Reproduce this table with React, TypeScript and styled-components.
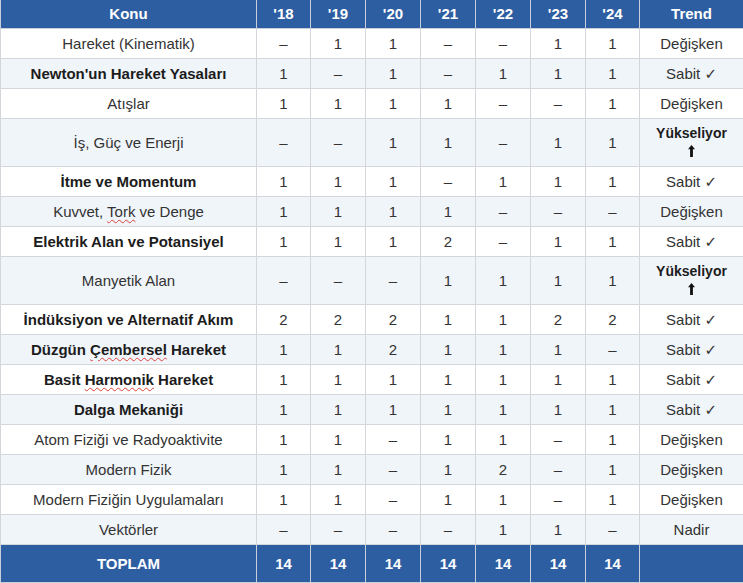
import React from 'react'
import styled, { createGlobalStyle } from 'styled-components'

const GlobalStyle = createGlobalStyle`
  html, body {
    margin: 0;
    padding: 0;
    background: #ffffff;
  }
  body {
    font-family: "Liberation Sans", Arial, "DejaVu Sans", sans-serif;
  }
`

type Row = {
  topic: React.ReactNode
  bold?: boolean
  values: string[]
  trend: 'Değişken' | 'Sabit' | 'Yükseliyor' | 'Nadir'
}

const Squiggle = styled.span`
  text-decoration: underline wavy #e0413a;
  text-decoration-thickness: 1px;
  text-underline-offset: 2px;
`

const D = '–'

const ROWS: Row[] = [
  { topic: 'Hareket (Kinematik)', values: [D, '1', '1', D, D, '1', '1'], trend: 'Değişken' },
  { topic: "Newton'un Hareket Yasaları", bold: true, values: ['1', D, '1', D, '1', '1', '1'], trend: 'Sabit' },
  { topic: 'Atışlar', values: ['1', '1', '1', '1', D, D, '1'], trend: 'Değişken' },
  { topic: 'İş, Güç ve Enerji', values: [D, D, '1', '1', D, '1', '1'], trend: 'Yükseliyor' },
  { topic: 'İtme ve Momentum', bold: true, values: ['1', '1', '1', D, '1', '1', '1'], trend: 'Sabit' },
  {
    topic: (
      <>
        Kuvvet, <Squiggle>Tork</Squiggle> ve Denge
      </>
    ),
    values: ['1', '1', '1', '1', D, D, D],
    trend: 'Değişken',
  },
  { topic: 'Elektrik Alan ve Potansiyel', bold: true, values: ['1', '1', '1', '2', D, '1', '1'], trend: 'Sabit' },
  { topic: 'Manyetik Alan', values: [D, D, D, '1', '1', '1', '1'], trend: 'Yükseliyor' },
  { topic: 'İndüksiyon ve Alternatif Akım', bold: true, values: ['2', '2', '2', '1', '1', '2', '2'], trend: 'Sabit' },
  {
    topic: (
      <>
        Düzgün <Squiggle>Çembersel</Squiggle> Hareket
      </>
    ),
    bold: true,
    values: ['1', '1', '2', '1', '1', '1', D],
    trend: 'Sabit',
  },
  {
    topic: (
      <>
        Basit <Squiggle>Harmonik</Squiggle> Hareket
      </>
    ),
    bold: true,
    values: ['1', '1', '1', '1', '1', '1', '1'],
    trend: 'Sabit',
  },
  { topic: 'Dalga Mekaniği', bold: true, values: ['1', '1', '1', '1', '1', '1', '1'], trend: 'Sabit' },
  { topic: 'Atom Fiziği ve Radyoaktivite', values: ['1', '1', D, '1', '1', D, '1'], trend: 'Değişken' },
  { topic: 'Modern Fizik', values: ['1', '1', D, '1', '2', D, '1'], trend: 'Değişken' },
  { topic: 'Modern Fiziğin Uygulamaları', values: ['1', '1', D, '1', '1', D, '1'], trend: 'Değişken' },
  { topic: 'Vektörler', values: [D, D, D, D, '1', '1', D], trend: 'Nadir' },
]

const YEARS = ["'18", "'19", "'20", "'21", "'22", "'23", "'24"]
const COL_WIDTHS = [256, 54, 55, 55, 55, 55, 55, 54, 104]

const Table = styled.table`
  width: 743px;
  table-layout: fixed;
  border-collapse: collapse;
  font-size: 15px;
  line-height: 17px;
  color: #333333;
`

const HeadCell = styled.th`
  background: #2e5ea2;
  color: #ffffff;
  font-weight: 700;
  text-align: center;
  padding: 5px 6px 6px;
  border: 1px solid #c9cfd8;
  border-top: none;
`

const BodyRow = styled.tr<{ $shaded: boolean }>`
  background: ${(p) => (p.$shaded ? '#f0f5fa' : '#ffffff')};
`

const Cell = styled.td<{ $bold?: boolean }>`
  text-align: center;
  padding: 6px 6px;
  border: 1px solid #d3d6da;
  font-weight: ${(p) => (p.$bold ? 700 : 400)};
  color: ${(p) => (p.$bold ? '#1c1c1c' : '#333333')};
`

const FootCell = styled.td`
  background: #2e5ea2;
  color: #ffffff;
  font-weight: 700;
  text-align: center;
  padding: 10px 6px;
  border: 1px solid #c9cfd8;
`

const Rising = styled.span`
  display: block;
  font-weight: 700;
  font-size: 14px;
  color: #1c1c1c;
`

const ArrowWrap = styled.span`
  display: block;
  height: 18px;
  line-height: 18px;

  svg {
    vertical-align: -1px;
  }
`

function UpArrow() {
  return (
    <svg width="7" height="12" viewBox="0 0 7 12" aria-hidden="true">
      <path d="M3.5 0 L7 4.2 L4.9 4.2 L4.9 12 L2.1 12 L2.1 4.2 L0 4.2 Z" fill="#111111" />
    </svg>
  )
}

function TrendLabel({ trend }: { trend: Row['trend'] }) {
  if (trend === 'Yükseliyor') {
    return (
      <>
        <Rising>Yükseliyor</Rising>
        <ArrowWrap>
          <UpArrow />
        </ArrowWrap>
      </>
    )
  }
  if (trend === 'Sabit') {
    return <>Sabit ✓</>
  }
  return <>{trend}</>
}

export default function App() {
  return (
    <>
      <GlobalStyle />
      <Table>
        <colgroup>
          {COL_WIDTHS.map((w, i) => (
            <col key={i} style={{ width: w }} />
          ))}
        </colgroup>
        <thead>
          <tr>
            <HeadCell>Konu</HeadCell>
            {YEARS.map((y) => (
              <HeadCell key={y}>{y}</HeadCell>
            ))}
            <HeadCell>Trend</HeadCell>
          </tr>
        </thead>
        <tbody>
          {ROWS.map((row, i) => (
            <BodyRow key={i} $shaded={i % 2 === 1}>
              <Cell $bold={row.bold}>{row.topic}</Cell>
              {row.values.map((v, j) => (
                <Cell key={j}>{v}</Cell>
              ))}
              <Cell>
                <TrendLabel trend={row.trend} />
              </Cell>
            </BodyRow>
          ))}
        </tbody>
        <tfoot>
          <tr>
            <FootCell>TOPLAM</FootCell>
            {YEARS.map((y) => (
              <FootCell key={y}>14</FootCell>
            ))}
            <FootCell />
          </tr>
        </tfoot>
      </Table>
    </>
  )
}
